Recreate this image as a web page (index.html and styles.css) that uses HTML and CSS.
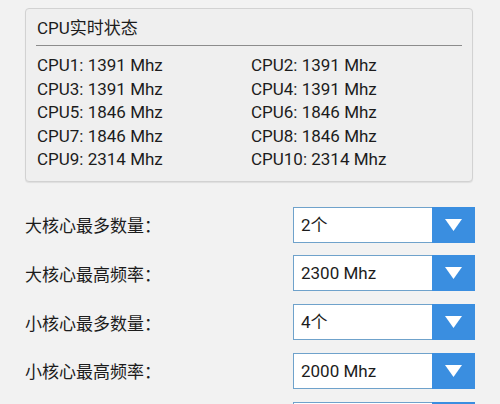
FILE: index.html
```html
<!DOCTYPE html>
<html>
<head>
<meta charset="utf-8">
<link rel="stylesheet" href="styles.css">
</head>
<body>
<div class="card">
  <div class="title">CPU实时状态</div>
  <div class="divider"></div>
  <div class="grid">
    <div>CPU1: 1391 Mhz</div><div>CPU2: 1391 Mhz</div>
    <div>CPU3: 1391 Mhz</div><div>CPU4: 1391 Mhz</div>
    <div>CPU5: 1846 Mhz</div><div>CPU6: 1846 Mhz</div>
    <div>CPU7: 1846 Mhz</div><div>CPU8: 1846 Mhz</div>
    <div>CPU9: 2314 Mhz</div><div>CPU10: 2314 Mhz</div>
  </div>
</div>
<div class="form">
  <div class="row">
    <div class="label">大核心最多数量：</div>
    <div class="select"><div class="value">2个</div><div class="btn"><svg width="17" height="12" viewBox="0 0 17 12"><polygon points="0,0 17,0 8.5,12" fill="#fff"/></svg></div></div>
  </div>
  <div class="row">
    <div class="label">大核心最高频率：</div>
    <div class="select"><div class="value">2300 Mhz</div><div class="btn"><svg width="17" height="12" viewBox="0 0 17 12"><polygon points="0,0 17,0 8.5,12" fill="#fff"/></svg></div></div>
  </div>
  <div class="row">
    <div class="label">小核心最多数量：</div>
    <div class="select"><div class="value">4个</div><div class="btn"><svg width="17" height="12" viewBox="0 0 17 12"><polygon points="0,0 17,0 8.5,12" fill="#fff"/></svg></div></div>
  </div>
  <div class="row">
    <div class="label">小核心最高频率：</div>
    <div class="select"><div class="value">2000 Mhz</div><div class="btn"><svg width="17" height="12" viewBox="0 0 17 12"><polygon points="0,0 17,0 8.5,12" fill="#fff"/></svg></div></div>
  </div>
  <div class="row">
    <div class="label"></div>
    <div class="select"><div class="value"></div><div class="btn"><svg width="17" height="12" viewBox="0 0 17 12"><polygon points="0,0 17,0 8.5,12" fill="#fff"/></svg></div></div>
  </div>
</div>
</body>
</html>
```
FILE: styles.css
```css
html, body {
  margin: 0;
  padding: 0;
}
body {
  width: 500px;
  height: 404px;
  overflow: hidden;
  background: #f2f2f2;
  font-family: Roboto, "Noto Sans CJK SC", sans-serif;
  color: #1c1c1c;
}
.card {
  margin: 8px 27px 0 25px;
  border: 1px solid #d2d2d2;
  border-radius: 4px;
  background: #efefef;
  box-shadow: 0 1px 1px rgba(0, 0, 0, 0.08);
  padding: 7px 10px 9px 10px;
}
.title {
  font-size: 17px;
  line-height: 24px;
  padding-left: 1px;
}
.divider {
  height: 1px;
  background: #8c8c8c;
  margin: 5px 0 8px;
}
.grid {
  display: grid;
  grid-template-columns: 214px 1fr;
  font-size: 17px;
  line-height: 23.5px;
  padding-left: 1px;
}
.form {
  margin-top: 25px;
  padding: 0 25px;
  height: 197px;
  overflow: hidden;
}
.row {
  display: flex;
  align-items: center;
  height: 36px;
  margin-bottom: 12.75px;
}
.label {
  width: 268px;
  font-size: 17px;
}
.select {
  display: flex;
  width: 182px;
  height: 36px;
}
.value {
  flex: 1;
  background: #fff;
  border: 1px solid #6fa2cb;
  border-right: none;
  padding-left: 7px;
  font-size: 17px;
  line-height: 34px;
}
.btn {
  width: 43px;
  background: #3a8ee0;
  display: flex;
  align-items: center;
  justify-content: center;
}
.btn svg {
  display: block;
}
```
